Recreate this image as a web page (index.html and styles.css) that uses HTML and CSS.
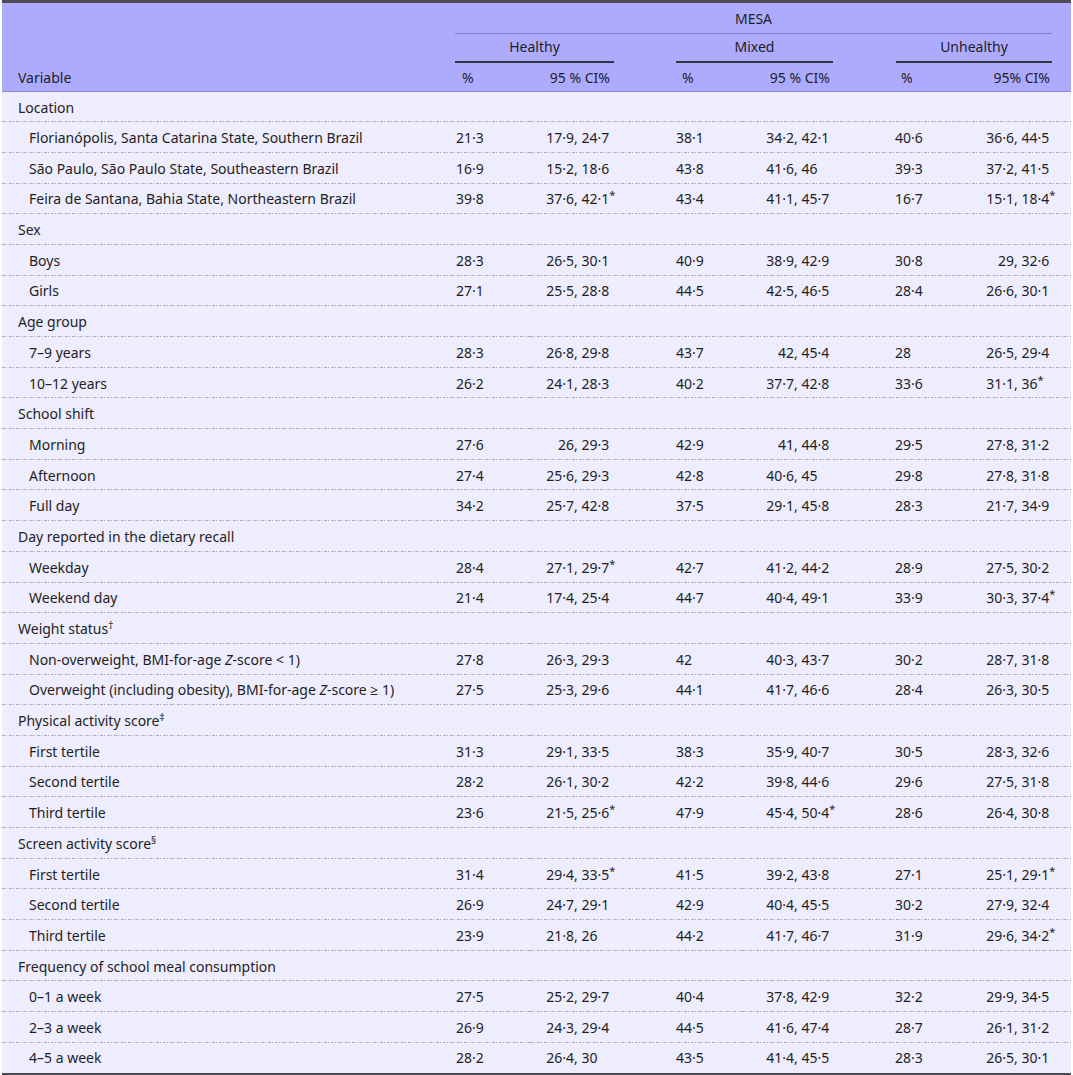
FILE: index.html
```html
<!DOCTYPE html>
<html lang="en">
<head>
  <meta charset="UTF-8">
  <title>MESA by variable</title>
  <link rel="stylesheet" href="styles.css">
</head>
<body>
  <table class="data">
    <colgroup>
      <col class="c-var">
      <col class="c-h-pct"><col class="c-h-ci">
      <col class="c-m-pct"><col class="c-m-ci">
      <col class="c-u-pct"><col class="c-u-ci">
    </colgroup>
    <thead>
      <tr class="h-top">
        <th></th>
        <th colspan="6" class="group"><div class="rule rule-mesa">MESA</div></th>
      </tr>
      <tr class="h-mid">
        <th></th>
        <th colspan="2" class="group"><div class="rule rule-strong rule-h">Healthy</div></th>
        <th colspan="2" class="group"><div class="rule rule-strong rule-m">Mixed</div></th>
        <th colspan="2" class="group"><div class="rule rule-strong rule-u">Unhealthy</div></th>
      </tr>
      <tr class="h-bot">
        <th class="var">Variable</th>
        <th class="pct">%</th><th class="ci ci-h">95 % CI%</th>
        <th class="pct">%</th><th class="ci ci-m">95 % CI%</th>
        <th class="pct">%</th><th class="ci ci-u">95% CI%</th>
      </tr>
    </thead>
    <tbody>
      <tr class="cat"><td>Location</td><td></td><td></td><td></td><td></td><td></td><td></td></tr>
      <tr><td class="sub">Florianópolis, Santa Catarina State, Southern Brazil</td><td>21·3</td><td><span class="lo">17·9</span>, 24·7</td><td>38·1</td><td><span class="lo">34·2</span>, 42·1</td><td>40·6</td><td><span class="lo">36·6</span>, 44·5</td></tr>
      <tr><td class="sub">São Paulo, São Paulo State, Southeastern Brazil</td><td>16·9</td><td><span class="lo">15·2</span>, 18·6</td><td>43·8</td><td><span class="lo">41·6</span>, 46</td><td>39·3</td><td><span class="lo">37·2</span>, 41·5</td></tr>
      <tr><td class="sub">Feira de Santana, Bahia State, Northeastern Brazil</td><td>39·8</td><td><span class="lo">37·6</span>, 42·1<sup>*</sup></td><td>43·4</td><td><span class="lo">41·1</span>, 45·7</td><td>16·7</td><td><span class="lo">15·1</span>, 18·4<sup>*</sup></td></tr>
      <tr class="cat"><td>Sex</td><td></td><td></td><td></td><td></td><td></td><td></td></tr>
      <tr><td class="sub">Boys</td><td>28·3</td><td><span class="lo">26·5</span>, 30·1</td><td>40·9</td><td><span class="lo">38·9</span>, 42·9</td><td>30·8</td><td><span class="lo">29</span>, 32·6</td></tr>
      <tr><td class="sub">Girls</td><td>27·1</td><td><span class="lo">25·5</span>, 28·8</td><td>44·5</td><td><span class="lo">42·5</span>, 46·5</td><td>28·4</td><td><span class="lo">26·6</span>, 30·1</td></tr>
      <tr class="cat"><td>Age group</td><td></td><td></td><td></td><td></td><td></td><td></td></tr>
      <tr><td class="sub">7–9 years</td><td>28·3</td><td><span class="lo">26·8</span>, 29·8</td><td>43·7</td><td><span class="lo">42</span>, 45·4</td><td>28</td><td><span class="lo">26·5</span>, 29·4</td></tr>
      <tr><td class="sub">10–12 years</td><td>26·2</td><td><span class="lo">24·1</span>, 28·3</td><td>40·2</td><td><span class="lo">37·7</span>, 42·8</td><td>33·6</td><td><span class="lo">31·1</span>, 36<sup>*</sup></td></tr>
      <tr class="cat"><td>School shift</td><td></td><td></td><td></td><td></td><td></td><td></td></tr>
      <tr><td class="sub">Morning</td><td>27·6</td><td><span class="lo">26</span>, 29·3</td><td>42·9</td><td><span class="lo">41</span>, 44·8</td><td>29·5</td><td><span class="lo">27·8</span>, 31·2</td></tr>
      <tr><td class="sub">Afternoon</td><td>27·4</td><td><span class="lo">25·6</span>, 29·3</td><td>42·8</td><td><span class="lo">40·6</span>, 45</td><td>29·8</td><td><span class="lo">27·8</span>, 31·8</td></tr>
      <tr><td class="sub">Full day</td><td>34·2</td><td><span class="lo">25·7</span>, 42·8</td><td>37·5</td><td><span class="lo">29·1</span>, 45·8</td><td>28·3</td><td><span class="lo">21·7</span>, 34·9</td></tr>
      <tr class="cat"><td>Day reported in the dietary recall</td><td></td><td></td><td></td><td></td><td></td><td></td></tr>
      <tr><td class="sub">Weekday</td><td>28·4</td><td><span class="lo">27·1</span>, 29·7<sup>*</sup></td><td>42·7</td><td><span class="lo">41·2</span>, 44·2</td><td>28·9</td><td><span class="lo">27·5</span>, 30·2</td></tr>
      <tr><td class="sub">Weekend day</td><td>21·4</td><td><span class="lo">17·4</span>, 25·4</td><td>44·7</td><td><span class="lo">40·4</span>, 49·1</td><td>33·9</td><td><span class="lo">30·3</span>, 37·4<sup>*</sup></td></tr>
      <tr class="cat"><td>Weight status<sup class="mark">†</sup></td><td></td><td></td><td></td><td></td><td></td><td></td></tr>
      <tr><td class="sub">Non-overweight, BMI-for-age <i>Z</i>-score &lt; 1)</td><td>27·8</td><td><span class="lo">26·3</span>, 29·3</td><td>42</td><td><span class="lo">40·3</span>, 43·7</td><td>30·2</td><td><span class="lo">28·7</span>, 31·8</td></tr>
      <tr><td class="sub">Overweight (including obesity), BMI-for-age <i>Z</i>-score ≥ 1)</td><td>27·5</td><td><span class="lo">25·3</span>, 29·6</td><td>44·1</td><td><span class="lo">41·7</span>, 46·6</td><td>28·4</td><td><span class="lo">26·3</span>, 30·5</td></tr>
      <tr class="cat"><td>Physical activity score<sup class="mark">‡</sup></td><td></td><td></td><td></td><td></td><td></td><td></td></tr>
      <tr><td class="sub">First tertile</td><td>31·3</td><td><span class="lo">29·1</span>, 33·5</td><td>38·3</td><td><span class="lo">35·9</span>, 40·7</td><td>30·5</td><td><span class="lo">28·3</span>, 32·6</td></tr>
      <tr><td class="sub">Second tertile</td><td>28·2</td><td><span class="lo">26·1</span>, 30·2</td><td>42·2</td><td><span class="lo">39·8</span>, 44·6</td><td>29·6</td><td><span class="lo">27·5</span>, 31·8</td></tr>
      <tr><td class="sub">Third tertile</td><td>23·6</td><td><span class="lo">21·5</span>, 25·6<sup>*</sup></td><td>47·9</td><td><span class="lo">45·4</span>, 50·4<sup>*</sup></td><td>28·6</td><td><span class="lo">26·4</span>, 30·8</td></tr>
      <tr class="cat"><td>Screen activity score<sup class="mark">§</sup></td><td></td><td></td><td></td><td></td><td></td><td></td></tr>
      <tr><td class="sub">First tertile</td><td>31·4</td><td><span class="lo">29·4</span>, 33·5<sup>*</sup></td><td>41·5</td><td><span class="lo">39·2</span>, 43·8</td><td>27·1</td><td><span class="lo">25·1</span>, 29·1<sup>*</sup></td></tr>
      <tr><td class="sub">Second tertile</td><td>26·9</td><td><span class="lo">24·7</span>, 29·1</td><td>42·9</td><td><span class="lo">40·4</span>, 45·5</td><td>30·2</td><td><span class="lo">27·9</span>, 32·4</td></tr>
      <tr><td class="sub">Third tertile</td><td>23·9</td><td><span class="lo">21·8</span>, 26</td><td>44·2</td><td><span class="lo">41·7</span>, 46·7</td><td>31·9</td><td><span class="lo">29·6</span>, 34·2<sup>*</sup></td></tr>
      <tr class="cat"><td>Frequency of school meal consumption</td><td></td><td></td><td></td><td></td><td></td><td></td></tr>
      <tr><td class="sub">0–1 a week</td><td>27·5</td><td><span class="lo">25·2</span>, 29·7</td><td>40·4</td><td><span class="lo">37·8</span>, 42·9</td><td>32·2</td><td><span class="lo">29·9</span>, 34·5</td></tr>
      <tr><td class="sub">2–3 a week</td><td>26·9</td><td><span class="lo">24·3</span>, 29·4</td><td>44·5</td><td><span class="lo">41·6</span>, 47·4</td><td>28·7</td><td><span class="lo">26·1</span>, 31·2</td></tr>
      <tr class="last"><td class="sub">4–5 a week</td><td>28·2</td><td><span class="lo">26·4</span>, 30</td><td>43·5</td><td><span class="lo">41·4</span>, 45·5</td><td>28·3</td><td><span class="lo">26·5</span>, 30·1</td></tr>
    </tbody>
  </table>
</body>
</html>
```

FILE: styles.css
```css
body {
  margin: 0;
  padding: 0;
  background-color: #fff;
  font-family: 'Noto Sans', 'Open Sans', sans-serif;
  font-size: 14px;
  color: #1e1e24;
}

.data {
  width: 1069px;
  margin: 0 2px;
  border-collapse: collapse;
  table-layout: fixed;
  border-top: 3px solid #4a4a55;
  border-bottom: 2px solid #4a4a55;
}

.c-var { width: 448px; }
.c-h-pct { width: 80px; }
.c-h-ci { width: 140px; }
.c-m-pct { width: 72px; }
.c-m-ci { width: 147px; }
.c-u-pct { width: 69px; }
.c-u-ci { width: 113px; }

thead {
  background-color: #aeabff;
}

th {
  font-weight: normal;
  text-align: left;
  padding: 0 0 0 8px;
  white-space: nowrap;
}

th.group {
  text-align: center;
  padding: 0;
  vertical-align: bottom;
}

.h-top th { height: 31px; }
.h-mid th { height: 29px; }
.h-bot th {
  height: 28px;
  border-bottom: 1px solid #8f8cc4;
}

.rule {
  padding-bottom: 5px;
}

.rule-mesa {
  border-bottom: 1px solid #8581c6;
  margin: 0 19px 0 5px;
}

.rule-strong {
  border-bottom: 2px solid #33333d;
  padding-bottom: 5px;
}

.rule-h { margin: 0 56px 0 5px; }
.rule-m { margin: 0 56px 0 6px; }
.rule-u { margin: 0 19px 0 7px; }

th.var { padding-left: 16px; }
th.pct { padding-left: 12px; }

th.ci { text-align: right; }
th.ci-h { padding-right: 60px; }
th.ci-m { padding-right: 59px; }
th.ci-u { padding-right: 21px; }

tbody {
  background-color: #eeedfd;
}

td {
  height: 30.7px;
  padding: 0 0 0 6px;
  white-space: nowrap;
  box-sizing: border-box;
  background-image: repeating-linear-gradient(to right, #abaabd 0 3px, transparent 3px 4px, #abaabd 4px 5px, transparent 5px 7px);
  background-size: 100% 1px;
  background-position: left bottom;
  background-repeat: no-repeat;
}

td:first-child {
  padding-left: 16px;
}

td.sub {
  padding-left: 27px;
}

tr.last td {
  background-image: none;
}

.lo {
  display: inline-block;
  min-width: 30px;
  text-align: right;
}

td:nth-child(3) { padding-left: 14px; }
td:nth-child(5) { padding-left: 22px; }
td:nth-child(7) { padding-left: 26px; }

sup {
  font-size: 11px;
  line-height: 0;
  vertical-align: 5px;
}

sup.mark {
  font-size: 10px;
}
```
